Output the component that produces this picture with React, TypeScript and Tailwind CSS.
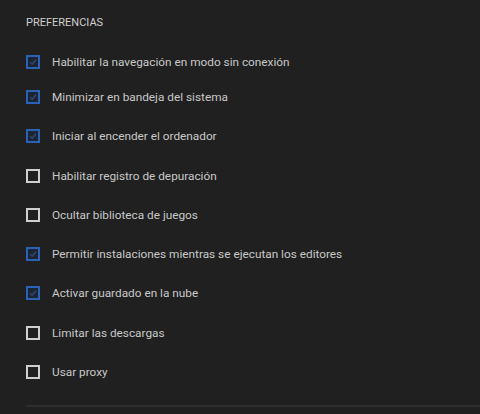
import React from "react";

const items: { label: string; checked: boolean }[] = [
  { label: "Habilitar la navegación en modo sin conexión", checked: true },
  { label: "Minimizar en bandeja del sistema", checked: true },
  { label: "Iniciar al encender el ordenador", checked: true },
  { label: "Habilitar registro de depuración", checked: false },
  { label: "Ocultar biblioteca de juegos", checked: false },
  { label: "Permitir instalaciones mientras se ejecutan los editores", checked: true },
  { label: "Activar guardado en la nube", checked: true },
  { label: "Limitar las descargas", checked: false },
  { label: "Usar proxy", checked: false },
];

function Box({ checked }: { checked: boolean }) {
  if (checked) {
    return (
      <span className="flex h-[14px] w-[14px] shrink-0 items-center justify-center border-2 border-[#2a62b8] bg-[#1c2434]">
        <svg width="10" height="10" viewBox="0 0 10 10" fill="none">
          <path d="M2 5.2 L4.2 7.2 L8 2.8" stroke="#2f4a74" strokeWidth="1.4" />
        </svg>
      </span>
    );
  }
  return <span className="h-[14px] w-[14px] shrink-0 border-2 border-[#cfcfcf]" />;
}

export default function App() {
  return (
    <div
      className="h-[414px] w-[480px] overflow-hidden bg-[#202020] pl-[26px] pt-[16px]"
      style={{ fontFamily: "Roboto, 'Noto Sans', sans-serif" }}
    >
      <div className="text-[11px] leading-[14px] uppercase text-[#cfcfcf]">Preferencias</div>
      <div className="mt-[25px] flex flex-col">
        {items.map((it, i) => (
          <div
            key={i}
            className={`flex h-[14px] items-center gap-[12px] ${i === 0 ? "" : i === 1 ? "mt-[21px]" : "mt-[25.3px]"}`}
          >
            <Box checked={it.checked} />
            <span className="text-[11.8px] leading-[14px] text-[#c8c8c8] whitespace-nowrap">{it.label}</span>
          </div>
        ))}
      </div>
      <div className="mt-[26px] h-[2px] bg-[#2e2e2e]" />
    </div>
  );
}
